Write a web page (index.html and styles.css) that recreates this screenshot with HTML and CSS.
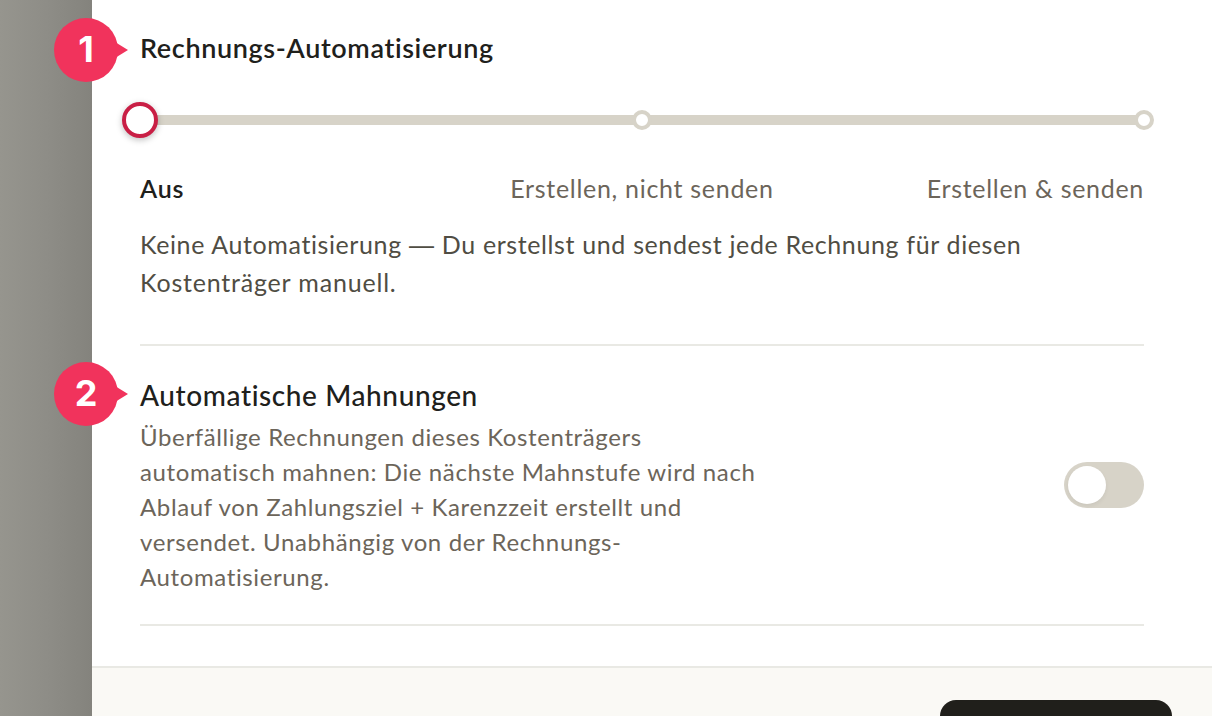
FILE: index.html
```html
<!DOCTYPE html>
<html lang="de">
<head>
	<meta charset="UTF-8">
	<title>Rechnungs-Automatisierung</title>
	<link rel="stylesheet" href="styles.css">
</head>
<body>

<div class="backdrop"></div>
<div class="panel">
	<div class="content">
		<section class="section automation">
			<span class="badge">1</span>
			<h2 class="title">Rechnungs-Automatisierung</h2>
			<div class="slider">
				<span class="thumb"></span>
				<span class="dot"></span>
				<span class="dot"></span>
			</div>
			<div class="labels">
				<span class="label-selected">Aus</span>
				<span class="label-mid">Erstellen, nicht senden</span>
				<span class="label-end">Erstellen &amp; senden</span>
			</div>
			<p class="hint">Keine Automatisierung <span class="dash">—</span> Du erstellst und sendest jede Rechnung für diesen<br><span class="hint-last">Kostenträger manuell.</span></p>
		</section>
		<section class="section reminders">
			<span class="badge">2</span>
			<div class="text">
				<h3 class="subtitle">Automatische Mahnungen</h3>
				<p class="desc">Überfällige Rechnungen dieses Kostenträgers<br>automatisch mahnen: Die nächste Mahnstufe wird nach<br>Ablauf von Zahlungsziel + Karenzzeit erstellt und<br>versendet. Unabhängig von der Rechnungs-<br>Automatisierung.</p>
			</div>
			<span class="toggle"></span>
		</section>
	</div>
	<div class="footer">
		<div class="button"></div>
	</div>
</div>

</body>
</html>
```
FILE: styles.css
```css
*{margin:0;padding:0;box-sizing: border-box;}

body{display: flex;width: 1212px;height: 716px;overflow: hidden;background: #fff;
    font-family: Lato,"Open Sans",sans-serif;color: #20201b;}

.backdrop{flex: none;width: 92px;background: linear-gradient(to right,#96958e,#8e8d87 50%,#84837d);}
.panel{flex: 1;display: flex;flex-direction: column;background: #fff;}
.content{flex: none;height: 666px;padding: 0 68px 0 48px;}

.section{position: relative;border-bottom: 2px solid #e9e9e4;}
.automation{height: 346px;padding-top: 29px;}
.title{height: 38px;line-height: 38px;font-size: 27px;font-weight: 600;letter-spacing: 0.62px;white-space: nowrap;}

/* Nummern */
.badge{position: absolute;left: -86px;top: 18px;width: 64px;height: 64px;border-radius: 50%;background: #f1335c;
    color: #fff;font: 700 36px/62px Inter,sans-serif;text-align: center;}
.badge:after{content: "";position: absolute;left: 61px;top: 24px;
    border-left: 13px solid #f1335c;border-top: 8px solid transparent;border-bottom: 8px solid transparent;}
.reminders .badge{top: 16px;}

/* Schieberegler */
.slider{display: flex;justify-content: space-between;align-items: center;height: 10px;margin: 48px -10px 0 -18px;
    background: linear-gradient(#d7d3c8,#d7d3c8) 18px 0/1004px 10px no-repeat;}
.thumb{width: 36px;height: 36px;border: 4px solid #c91f45;border-radius: 50%;background: #fff;box-shadow: 0 2px 6px rgba(0,0,0,0.25);}
.dot{width: 20px;height: 20px;border: 4px solid #d7d3c8;border-radius: 50%;background: #fff;}
.thumb + .dot{margin-left: -8px;}

.labels{display: grid;grid-template-columns: 1fr auto 1fr;height: 38px;margin-top: 44px;line-height: 38px;font-size: 25px;color: #6c655a;white-space: nowrap;}
.label-selected{font-weight: 600;letter-spacing: 0.8px;color: #20201b;}
.label-mid,.label-end{letter-spacing: 0.7px;}
.label-end{text-align: right;}
.hint{margin-top: 18px;line-height: 38px;font-size: 25px;letter-spacing: 0.6px;word-spacing: 0.2px;color: #504d43;white-space: nowrap;}
.hint-last{letter-spacing: 0.8px;}
.dash{font-family: "Liberation Sans",sans-serif;line-height: 1;}

.reminders{display: flex;justify-content: space-between;height: 280px;padding-top: 29px;}
.subtitle{height: 40px;line-height: 40px;font-size: 28px;font-weight: 500;letter-spacing: 0.6px;white-space: nowrap;}
.desc{margin-top: 4px;line-height: 35px;font-size: 24px;letter-spacing: 0.62px;color: #6c655a;white-space: nowrap;}
.toggle{width: 80px;height: 46px;margin-top: 87px;padding: 4px;border-radius: 23px;background: #d7d3c8;}
.toggle:before{content: "";display: block;width: 38px;height: 38px;border-radius: 50%;background: #fff;box-shadow: 0 2px 4px rgba(0,0,0,0.06);}

.footer{flex: 1;display: flex;justify-content: flex-end;padding: 32px 40px 0;border-top: 2px solid #e9e9e4;background: #faf9f5;}
.button{width: 232px;height: 16px;border-radius: 16px 16px 0 0;background: #201f1b;}
```
